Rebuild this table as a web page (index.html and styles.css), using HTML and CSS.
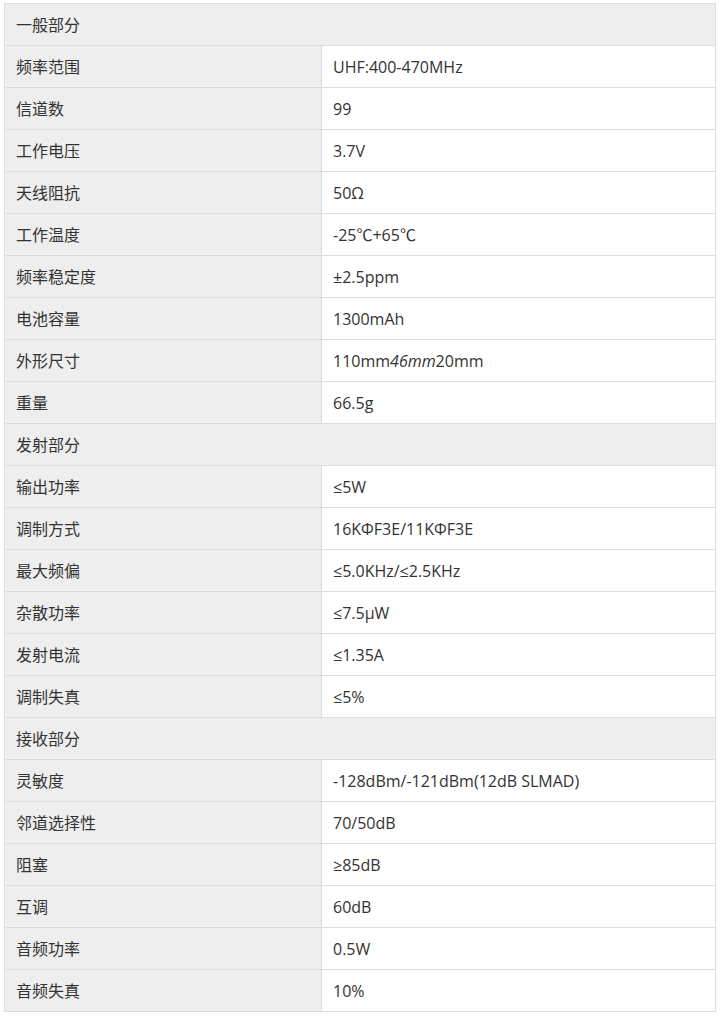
FILE: index.html
```html
<!DOCTYPE html>
<html lang="zh-CN">
<head>
<meta charset="utf-8">
<title>参数</title>
<link rel="stylesheet" href="styles.css">
</head>
<body>
<table class="spec">
  <colgroup><col class="c-k"><col class="c-v"></colgroup>
  <tbody>
    <tr class="section"><td colspan="2">一般部分</td></tr>
    <tr><td class="k">频率范围</td><td class="v">UHF:400-470MHz</td></tr>
    <tr><td class="k">信道数</td><td class="v">99</td></tr>
    <tr><td class="k">工作电压</td><td class="v">3.7V</td></tr>
    <tr><td class="k">天线阻抗</td><td class="v">50Ω</td></tr>
    <tr><td class="k">工作温度</td><td class="v">-25℃+65℃</td></tr>
    <tr><td class="k">频率稳定度</td><td class="v">±2.5ppm</td></tr>
    <tr><td class="k">电池容量</td><td class="v">1300mAh</td></tr>
    <tr><td class="k">外形尺寸</td><td class="v">110mm<em>46mm</em>20mm</td></tr>
    <tr><td class="k">重量</td><td class="v">66.5g</td></tr>
    <tr class="section"><td colspan="2">发射部分</td></tr>
    <tr><td class="k">输出功率</td><td class="v">≤5W</td></tr>
    <tr><td class="k">调制方式</td><td class="v">16KΦF3E/11KΦF3E</td></tr>
    <tr><td class="k">最大频偏</td><td class="v">≤5.0KHz/≤2.5KHz</td></tr>
    <tr><td class="k">杂散功率</td><td class="v">≤7.5μW</td></tr>
    <tr><td class="k">发射电流</td><td class="v">≤1.35A</td></tr>
    <tr><td class="k">调制失真</td><td class="v">≤5%</td></tr>
    <tr class="section"><td colspan="2">接收部分</td></tr>
    <tr><td class="k">灵敏度</td><td class="v">-128dBm/-121dBm(12dB SLMAD)</td></tr>
    <tr><td class="k">邻道选择性</td><td class="v">70/50dB</td></tr>
    <tr><td class="k">阻塞</td><td class="v">≥85dB</td></tr>
    <tr><td class="k">互调</td><td class="v">60dB</td></tr>
    <tr><td class="k">音频功率</td><td class="v">0.5W</td></tr>
    <tr><td class="k">音频失真</td><td class="v">10%</td></tr>
  </tbody>
</table>
</body>
</html>
```
FILE: styles.css
```css
html, body {
  margin: 0;
  padding: 0;
  background: #fff;
}
body {
  font-family: "Open Sans", "Noto Sans CJK SC", sans-serif;
  font-size: 16px;
  color: #333;
}
.spec {
  border-collapse: collapse;
  width: 712px;
  margin: 3px 0 0 4px;
  table-layout: fixed;
}
.spec .c-k {
  width: 317px;
}
.spec td {
  border: 1px solid #ddd;
  height: 42px;
  padding: 0 0 0 11px;
  box-sizing: border-box;
  vertical-align: middle;
  line-height: 20px;
  white-space: nowrap;
}
.spec .k {
  background: #eee;
}
.spec .v {
  background: #fff;
}
.spec .section td {
  background: #eee;
}
.spec em {
  font-style: italic;
}
```
